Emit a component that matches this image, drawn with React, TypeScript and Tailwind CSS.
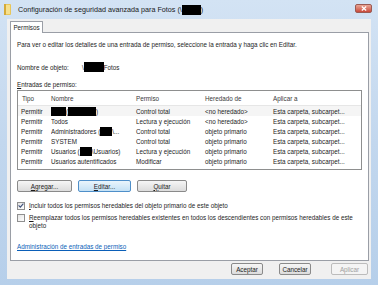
import React from "react";

const Blk = ({ w, h = 9 }: { w: number; h?: number }) => (
  <span className="inline-block bg-black align-middle" style={{ width: w, height: h }} />
);

const rows: { name: React.ReactNode; perm: string; from: string }[] = [
  {
    name: (
      <span className="flex items-center">
        <Blk w={15} />
        <span>(</span>
        <Blk w={28} />
        <span>)</span>
      </span>
    ),
    perm: "Control total",
    from: "<no heredado>",
  },
  { name: "Todos", perm: "Lectura y ejecución", from: "<no heredado>" },
  {
    name: (
      <span className="flex items-center">
        <span>Administradores (</span>
        <Blk w={12} />
        <span>\...</span>
      </span>
    ),
    perm: "Control total",
    from: "objeto primario",
  },
  { name: "SYSTEM", perm: "Control total", from: "objeto primario" },
  {
    name: (
      <span className="flex items-center">
        <span>Usuarios (</span>
        <Blk w={12} />
        <span>\Usuarios)</span>
      </span>
    ),
    perm: "Lectura y ejecución",
    from: "objeto primario",
  },
  { name: "Usuarios autentificados", perm: "Modificar", from: "objeto primario" },
];

const Btn = ({
  children,
  w,
  def,
  disabled,
}: {
  children: React.ReactNode;
  w: number;
  def?: boolean;
  disabled?: boolean;
}) => (
  <div
    className={
      "h-[12px] flex items-center justify-center rounded-[2px] border " +
      (def
        ? "border-[#4f8fc9] bg-gradient-to-b from-[#eaf5fc] to-[#c4e1f5]"
        : disabled
        ? "border-[#bcbcbc] bg-[#f4f4f4] text-[#a0a0a0]"
        : "border-[#8a8a8a] bg-gradient-to-b from-[#f6f6f6] to-[#dcdcdc]")
    }
    style={{ width: w }}
  >
    {children}
  </div>
);

export default function App() {
  return (
    <div
      className="w-[378px] h-[285px] flex flex-col bg-gradient-to-b from-[#d3e3f4] via-[#c2d7ee] to-[#b6cfea] text-[#1c1c1c] overflow-hidden"
      style={{ fontFamily: "'Liberation Sans', Arial, sans-serif" }}
    >
      {/* title bar */}
      <div className="h-[19px] flex items-center pl-[4px] pr-[6px] shrink-0">
        <svg width="7" height="11" viewBox="0 0 7 11" className="shrink-0">
          <rect x="0" y="0" width="7" height="11" rx="1" fill="#e8c65a" />
          <rect x="1" y="1" width="5" height="9" fill="#f6e08e" />
          <rect x="0" y="0" width="2" height="11" fill="#d4aa3a" />
        </svg>
        <div className="ml-[7px] text-[7.2px] leading-none flex items-center text-[#1a1a1a] whitespace-nowrap">
          <span>Configuración de seguridad avanzada para Fotos (\</span>
          <Blk w={19} h={10} />
          <span>)</span>
        </div>
        <div className="flex-1" />
        <div className="w-[17px] h-[9px] -mt-[2px] rounded-[2px] border border-[#9b5a52] bg-gradient-to-b from-[#e8a595] to-[#c9473a] flex items-center justify-center">
          <svg width="6" height="5" viewBox="0 0 6 5">
            <path d="M0.8 0.5 L5.2 4.5 M5.2 0.5 L0.8 4.5" stroke="#fff" strokeWidth="1.2" />
          </svg>
        </div>
      </div>

      {/* client */}
      <div className="flex-1 mx-[7px] mb-[6px] bg-[#f0f0f0] flex flex-col pl-[3px] pr-[2px] pt-[2px] text-[6.3px] leading-[9px]">
        {/* tab strip */}
        <div className="flex h-[11px] relative z-10">
          <div className="w-[33px] h-[12px] bg-white border border-b-0 border-[#9a9ea6] rounded-t-[1px] flex items-center justify-center">
            Permisos
          </div>
        </div>
        {/* panel */}
        <div className="h-[229px] bg-white border border-[#9a9ea6] flex flex-col pl-[6px] pr-[6px]">
          <div className="mt-[7px] whitespace-nowrap">
            Para ver o editar los detalles de una entrada de permiso, seleccione la entrada y haga clic en Editar.
          </div>
          <div className="mt-[13px] flex items-center whitespace-nowrap">
            <span className="w-[65px]">Nombre de objeto:</span>
            <span>\</span>
            <Blk w={20} h={10} />
            <span>Fotos</span>
          </div>
          <div className="mt-[8px]">
            <span className="underline">E</span>ntradas de permiso:
          </div>
          {/* list */}
          <div className="mt-[1px] h-[80px] w-[345px] border border-[#8e8f8f] bg-white flex flex-col">
            <div className="h-[15px] flex items-center border-b border-[#e6e6e6] text-[#3a3a3a]">
              <span className="w-[33px] pl-[4px]">Tipo</span>
              <span className="w-[85px]">Nombre</span>
              <span className="w-[69px]">Permiso</span>
              <span className="w-[68px]">Heredado de</span>
              <span>Aplicar a</span>
            </div>
            {rows.map((r, i) => (
              <div key={i} className={"h-[10px] flex items-center whitespace-nowrap " + (i === 0 ? "bg-[#f5f5f5]" : "")}>
                <span className="w-[33px] pl-[3px]">Permitir</span>
                <span className="w-[85px] overflow-hidden">{r.name}</span>
                <span className="w-[69px]">{r.perm}</span>
                <span className="w-[68px]">{r.from}</span>
                <span>Esta carpeta, subcarpet...</span>
              </div>
            ))}
          </div>
          {/* buttons */}
          <div className="mt-[10px] flex gap-[6px]">
            <Btn w={55}>
              <span>
                <span className="underline">A</span>gregar...
              </span>
            </Btn>
            <Btn w={53} def>
              <span>
                <span className="underline">E</span>ditar...
              </span>
            </Btn>
            <Btn w={50}>
              <span>
                <span className="underline">Q</span>uitar
              </span>
            </Btn>
          </div>
          {/* checkboxes */}
          <div className="mt-[9px] flex items-start">
            <div className="w-[8px] h-[8px] mt-[0.5px] border border-[#8f8f8f] bg-gradient-to-br from-[#e4e4e4] to-white flex items-center justify-center shrink-0">
              <svg width="6" height="5" viewBox="0 0 6 5">
                <path d="M0.6 2.4 L2.3 4.1 L5.4 0.6" stroke="#3b4e7a" strokeWidth="1.1" fill="none" />
              </svg>
            </div>
            <div className="ml-[4px] whitespace-nowrap">
              <span className="underline">I</span>ncluir todos los permisos heredables del objeto primario de este objeto
            </div>
          </div>
          <div className="mt-[3px] flex items-start">
            <div className="w-[8px] h-[8px] mt-[0.5px] border border-[#8f8f8f] bg-gradient-to-br from-[#e4e4e4] to-white shrink-0" />
            <div className="ml-[4px]">
              <div className="whitespace-nowrap">
                <span className="underline">R</span>eemplazar todos los permisos heredables existentes en todos los descendientes con permisos heredables de este
              </div>
              <div className="-mt-[1px]">objeto</div>
            </div>
          </div>
          <div className="mt-[12px] text-[#0b5fb8] underline">Administración de entradas de permiso</div>
        </div>
        {/* bottom buttons */}
        <div className="mt-[2px] flex justify-end pr-[1px]">
          <Btn w={32}>Aceptar</Btn>
          <div className="w-[16px]" />
          <Btn w={32}>Cancelar</Btn>
          <div className="w-[20px]" />
          <Btn w={37} disabled>
            Aplicar
          </Btn>
        </div>
      </div>
    </div>
  );
}
